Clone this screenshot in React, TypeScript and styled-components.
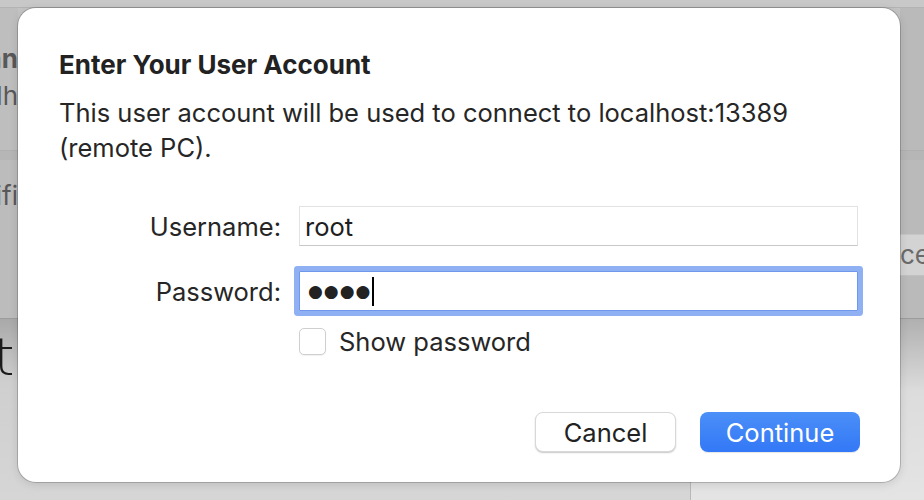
import React from "react";
import styled, { createGlobalStyle } from "styled-components";

const Global = createGlobalStyle`
  html, body { margin: 0; padding: 0; }
  body { width: 924px; height: 500px; overflow: hidden; }
`;

const FONT = `Inter, "Noto Sans", "Liberation Sans", sans-serif`;
const SIZE = "25.5px";

const Screen = styled.div`
  position: relative;
  width: 924px;
  height: 500px;
  overflow: hidden;
  font-family: ${FONT};
  background: #c4c4c4;
`;

/* ---------- dimmed window behind the sheet ---------- */
const BackWindow = styled.div`
  display: grid;
  grid-template-columns: 18px 1fr 24px;
  grid-template-rows: 8px 142px 10px 158px 182px;
  width: 100%;
  height: 100%;
`;

const TopStrip = styled.div`
  grid-column: 1 / -1;
  background: #c8c8c8;
  border-bottom: 1px solid #b4b4b4;
`;

const Pane = styled.div<{ $tone: string }>`
  background: ${(p) => p.$tone};
  overflow: hidden;
  display: flex;
  flex-direction: column;
  align-items: flex-end;
  color: #585858;
  font-size: 26px;
  white-space: nowrap;
`;

const Band = styled.div`
  grid-column: 1 / -1;
  background: #b6b6b6;
  border-top: 1px solid #b0b0b0;
`;

const BackLine = styled.div<{ $bold?: boolean; $top: number }>`
  margin-top: ${(p) => p.$top}px;
  font-weight: ${(p) => (p.$bold ? 700 : 400)};
  line-height: 30px;
`;

const RightPane = styled.div`
  background: #bababa;
  display: flex;
  flex-direction: column;
  overflow: hidden;
`;

const BackField = styled.div`
  margin-top: 74px;
  height: 40px;
  background: #d3d3d3;
  border-top: 1px solid #c6c6c6;
  border-bottom: 1px solid #c0c0c0;
  color: #6a6a6a;
  font-size: 26px;
  line-height: 40px;
  white-space: nowrap;
`;

const LowerArea = styled.div`
  grid-column: 1 / -1;
  display: grid;
  grid-template-columns: 691px 1fr;
  border-top: 1px solid #9c9c9c;
`;

const Canvas = styled.div`
  background: linear-gradient(180deg, #a9a9a9 0%, #cfcfcf 35%, #d6d6d6 100%);
  border-right: 1px solid #b8b8b8;
  overflow: hidden;
`;

const Scribble = styled.div`
  margin-top: 12px;
  margin-left: -6px;
  font-family: "DejaVu Sans", sans-serif;
  font-weight: 300;
  font-size: 52px;
  line-height: 52px;
  color: #1c1c1c;
`;

const SidePanel = styled.div`
  background: linear-gradient(180deg, #b0b0b0 0%, #dcdcdc 40%, #e4e4e4 100%);
`;

/* ---------- sheet ---------- */
const Sheet = styled.div`
  position: absolute;
  left: 18px;
  top: 8px;
  width: 882px;
  height: 474px;
  box-sizing: border-box;
  background: #ffffff;
  border-radius: 18px;
  box-shadow: 0 0 0 1px rgba(0, 0, 0, 0.18), 0 2px 10px rgba(0, 0, 0, 0.12);
  padding: 43px 40px 30px 41px;
  display: flex;
  flex-direction: column;
  color: #222222;
`;

const Title = styled.h1`
  margin: 0;
  font-size: 26px;
  font-weight: 700;
  line-height: 28px;
  color: #222;
`;

const Message = styled.p`
  margin: 16px 0 0;
  font-size: ${SIZE};
  line-height: 35px;
  color: #262626;
`;

const Form = styled.div`
  margin-top: 41px;
  display: grid;
  grid-template-columns: 222px 559px;
  column-gap: 18px;
  row-gap: 25px;
  align-items: center;
`;

const Label = styled.label`
  text-align: right;
  font-size: ${SIZE};
  color: #262626;
`;

const Field = styled.div<{ $focused?: boolean }>`
  height: 40px;
  box-sizing: border-box;
  border: 1px solid #e2e2e2;
  border-bottom-color: #c8c8c8;
  background: #fff;
  display: flex;
  align-items: center;
  padding-left: ${(p) => (p.$focused ? 8 : 5)}px;
  font-size: ${SIZE};
  color: #1e1e1e;
  ${(p) =>
    p.$focused &&
    `
    border: 1px solid #6f97ea;
    box-shadow: 0 0 0 5px #8fb1f4;
    border-radius: 1px;
  `}
`;

const Dots = styled.span`
  font-family: "DejaVu Sans", sans-serif;
  font-size: 17px;
  letter-spacing: 1px;
  color: #222;
`;

const Caret = styled.span`
  display: inline-block;
  width: 2px;
  height: 29px;
  background: #000;
  margin-left: 1px;
`;

const CheckRow = styled.div`
  grid-column: 2;
  display: flex;
  align-items: center;
  gap: 13px;
  margin-top: -10px;
  font-size: ${SIZE};
  color: #262626;
`;

const Checkbox = styled.span`
  width: 27px;
  height: 27px;
  box-sizing: border-box;
  border: 1px solid #cfcfcf;
  border-radius: 5px;
  background: #fff;
  box-shadow: 0 1px 1px rgba(0, 0, 0, 0.06);
`;

const Actions = styled.div`
  margin-top: auto;
  display: flex;
  justify-content: flex-end;
  gap: 24px;
`;

const Button = styled.button<{ $primary?: boolean }>`
  height: 40px;
  border-radius: 8px;
  font-family: ${FONT};
  font-size: ${SIZE};
  padding: 0;
  cursor: default;
  ${(p) =>
    p.$primary
      ? `
    width: 160px;
    border: none;
    color: #ffffff;
    background: linear-gradient(180deg, #4b8ff8 0%, #3378f6 100%);
    box-shadow: 0 1px 1px rgba(0,0,0,0.1);
  `
      : `
    width: 141px;
    border: 1px solid #d8d8d8;
    color: #222;
    background: #ffffff;
    box-shadow: 0 1px 1.5px rgba(0,0,0,0.22);
  `}
`;

export default function App() {
  return (
    <Screen>
      <Global />
      <BackWindow>
        <TopStrip />
        <Pane $tone="#bebebe">
          <BackLine $bold $top={36}>Conn</BackLine>
          <BackLine $top={7}>localh</BackLine>
        </Pane>
        <div />
        <RightPane />
        <Band />
        <Pane $tone="#bcbcbc">
          <BackLine $top={21}>Certifi</BackLine>
        </Pane>
        <div />
        <RightPane>
          <BackField>ce</BackField>
        </RightPane>
        <LowerArea>
          <Canvas>
            <Scribble>t</Scribble>
          </Canvas>
          <SidePanel />
        </LowerArea>
      </BackWindow>

      <Sheet>
        <Title>Enter Your User Account</Title>
        <Message>
          This user account will be used to connect to localhost:13389
          <br />
          (remote PC).
        </Message>
        <Form>
          <Label>Username:</Label>
          <Field>root</Field>
          <Label>Password:</Label>
          <Field $focused>
            <Dots>●●●●</Dots>
            <Caret />
          </Field>
          <CheckRow>
            <Checkbox />
            Show password
          </CheckRow>
        </Form>
        <Actions>
          <Button>Cancel</Button>
          <Button $primary>Continue</Button>
        </Actions>
      </Sheet>
    </Screen>
  );
}
